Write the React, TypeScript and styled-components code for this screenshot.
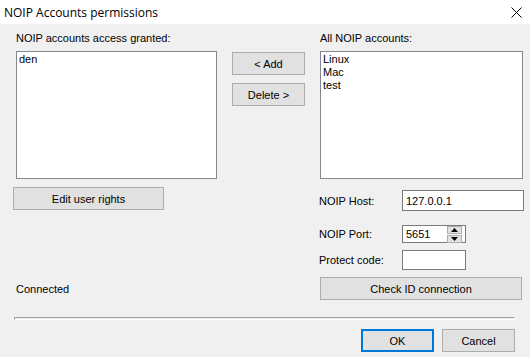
import React from 'react'
import styled, { createGlobalStyle } from 'styled-components'

const GlobalStyle = createGlobalStyle`
    html, body {
        margin: 0;
        padding: 0;
        background: #f0f0f0;
    }
    body {
        font-family: "Liberation Sans", Arial, sans-serif;
        font-size: 11px;
        color: #000;
    }
`

const Window = styled.div`
    width: 530px;
    height: 357px;
    display: flex;
    flex-direction: column;
    background: #f0f0f0;
    overflow: hidden;
`

const TitleBar = styled.div`
    height: 24px;
    background: #fff;
    display: flex;
    align-items: center;
    justify-content: space-between;
    padding: 0 8px 0 4px;
    font-family: "Open Sans", "Noto Sans", sans-serif;
    font-size: 12px;
`

const Content = styled.div`
    padding: 8px 7px 0 16px;
    display: flex;
    flex-direction: column;
`

const TopGrid = styled.div`
    display: grid;
    grid-template-columns: 201px 73px 203px;
    column-gap: 15px;
`

const Column = styled.div`
    display: flex;
    flex-direction: column;
`

const Label = styled.div`
    height: 19px;
    line-height: 13px;
`

const ListBox = styled.div`
    height: 124px;
    background: #fff;
    border: 1px solid #828790;
    padding: 1px 2px;
    line-height: 13px;
`

const ButtonStack = styled.div`
    display: flex;
    flex-direction: column;
    gap: 8px;
    padding-top: 20px;
`

const Button = styled.button<{ $w?: number; $default?: boolean }>`
    box-sizing: border-box;
    width: ${p => (p.$w ? `${p.$w}px` : '100%')};
    height: 23px;
    margin: 0;
    padding: 0;
    background: #e1e1e1;
    border: ${p => (p.$default ? '2px solid #0078d7' : '1px solid #adadad')};
    font-family: inherit;
    font-size: 11px;
    color: #000;
`

const LowerGrid = styled.div`
    display: grid;
    grid-template-columns: 1fr 203px;
`

const LeftLower = styled.div`
    display: flex;
    flex-direction: column;
    justify-content: space-between;
    padding-top: 8px;
    margin-left: -3px;
`

const Status = styled.div`
    padding-left: 3px;
    line-height: 22px;
`

const RightLower = styled.div`
    display: flex;
    flex-direction: column;
    padding-top: 11px;
`

const FormRow = styled.div<{ $gap: number }>`
    display: grid;
    grid-template-columns: 82px auto;
    align-items: center;
    margin-bottom: ${p => p.$gap}px;
`

const FieldLabel = styled.div`
    margin-left: -1px;
`

const TextField = styled.div<{ $w: number; $h: number }>`
    position: relative;
    box-sizing: border-box;
    width: ${p => p.$w}px;
    height: ${p => p.$h}px;
    background: #fff;
    border: 1px solid #7a7a7a;
    padding: 0 3px;
    display: flex;
    align-items: center;
`

const Spinner = styled.div`
    position: absolute;
    right: 3px;
    top: 0;
    display: flex;
    flex-direction: column;
    gap: 1px;
`

const SpinButton = styled.div`
    width: 13px;
    height: 6px;
    background: #e1e1e1;
    border: 1px solid #adadad;
    box-sizing: content-box;
    display: flex;
    align-items: center;
    justify-content: center;
`

const Separator = styled.div`
    margin: 17px 8px 0 -2px;
    height: 1px;
    border-top: 1px solid #a0a0a0;
    border-left: 1px solid #a0a0a0;
    border-bottom: 1px solid #fff;
    border-right: 1px solid #fff;
`

const Footer = styled.div`
    display: flex;
    justify-content: flex-end;
    gap: 8px;
    padding: 9px 8px 0 0;
`

function Arrow({ up }: { up?: boolean }) {
    return (
        <svg width="7" height="4" viewBox="0 0 7 4">
            <polygon points={up ? '3.5,0 7,4 0,4' : '0,0 7,0 3.5,4'} fill="#000" />
        </svg>
    )
}

export default function App() {
    return (
        <Window>
            <GlobalStyle />
            <TitleBar>
                <span>NOIP Accounts permissions</span>
                <svg width="11" height="11" viewBox="0 0 11 11">
                    <path d="M0.5 0.5 L10.5 10.5 M10.5 0.5 L0.5 10.5" stroke="#000" strokeWidth="1" />
                </svg>
            </TitleBar>
            <Content>
                <TopGrid>
                    <Column>
                        <Label>NOIP accounts access granted:</Label>
                        <ListBox>
                            <div>den</div>
                        </ListBox>
                    </Column>
                    <ButtonStack>
                        <Button>&lt; Add</Button>
                        <Button>Delete &gt;</Button>
                    </ButtonStack>
                    <Column>
                        <Label>All NOIP accounts:</Label>
                        <ListBox>
                            <div>Linux</div>
                            <div>Mac</div>
                            <div>test</div>
                        </ListBox>
                    </Column>
                </TopGrid>
                <LowerGrid>
                    <LeftLower>
                        <Button $w={151}>Edit user rights</Button>
                        <Status>Connected</Status>
                    </LeftLower>
                    <RightLower>
                        <FormRow $gap={14}>
                            <FieldLabel>NOIP Host:</FieldLabel>
                            <TextField $w={122} $h={21}>127.0.0.1</TextField>
                        </FormRow>
                        <FormRow $gap={7}>
                            <FieldLabel>NOIP Port:</FieldLabel>
                            <TextField $w={64} $h={18}>
                                5651
                                <Spinner>
                                    <SpinButton><Arrow up /></SpinButton>
                                    <SpinButton><Arrow /></SpinButton>
                                </Spinner>
                            </TextField>
                        </FormRow>
                        <FormRow $gap={7}>
                            <FieldLabel>Protect code:</FieldLabel>
                            <TextField $w={64} $h={20} />
                        </FormRow>
                        <Button $w={202}>Check ID connection</Button>
                    </RightLower>
                </LowerGrid>
                <Separator />
                <Footer>
                    <Button $w={73} $default>OK</Button>
                    <Button $w={73}>Cancel</Button>
                </Footer>
            </Content>
        </Window>
    )
}
